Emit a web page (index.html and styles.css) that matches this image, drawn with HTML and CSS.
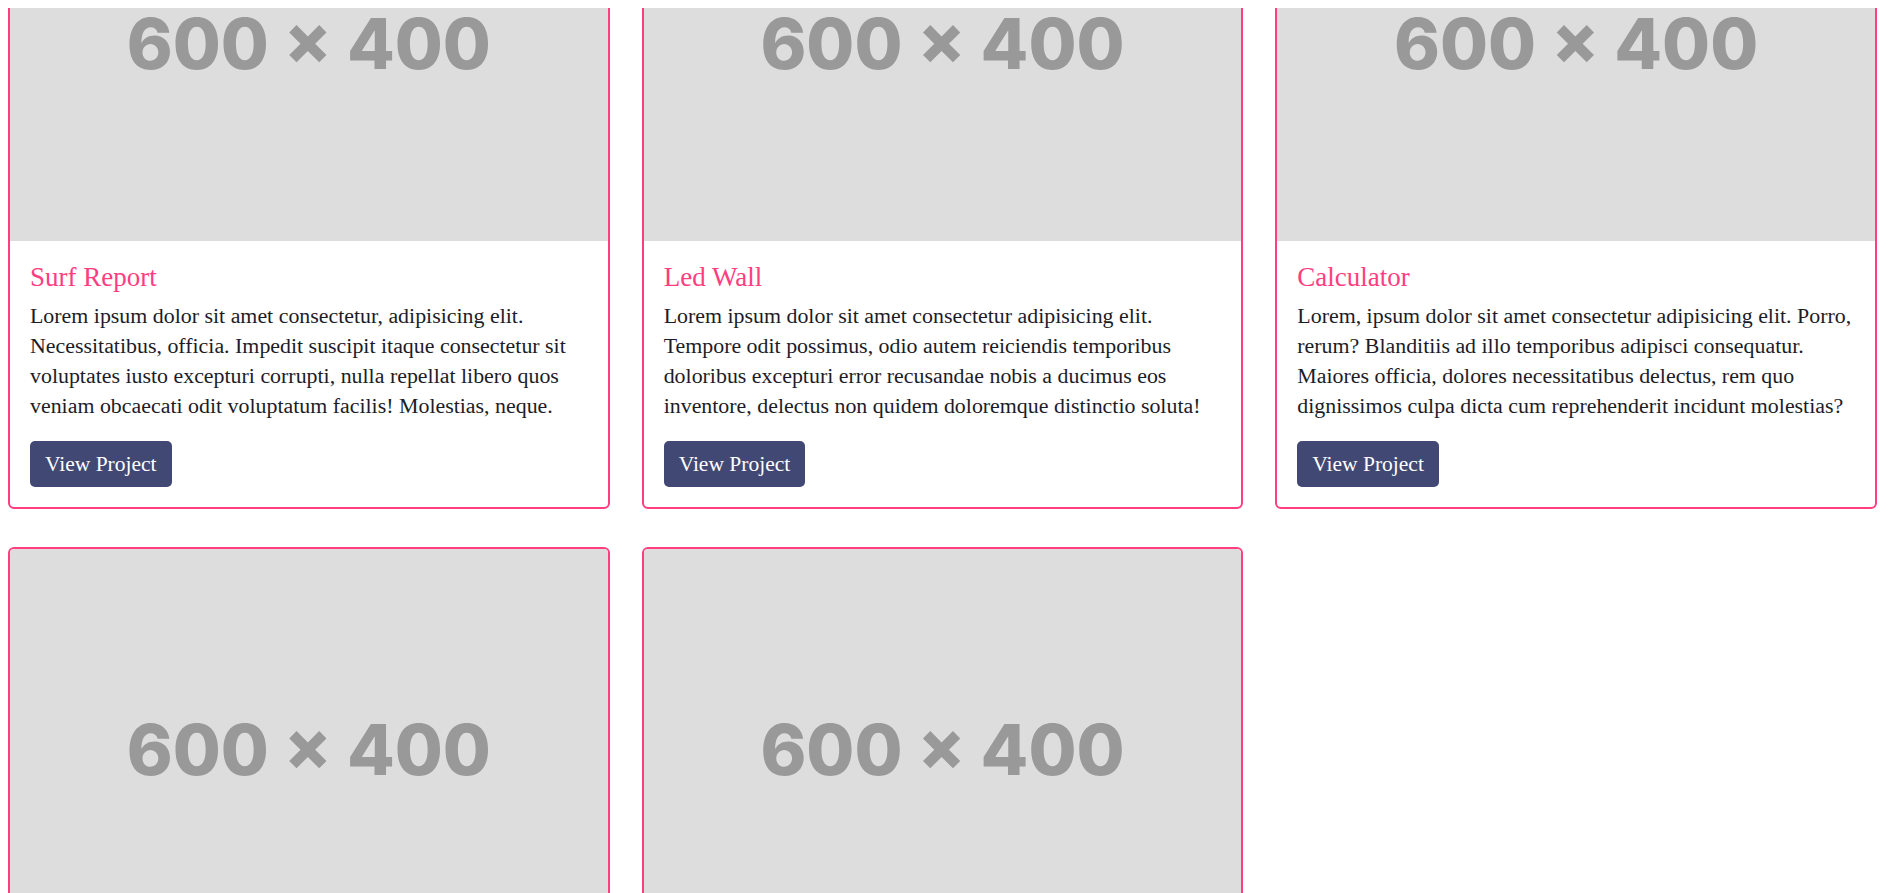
FILE: index.html
```html
<!DOCTYPE html>
<html lang="en">
<head>
<meta charset="utf-8">
<title>Projects</title>
<link rel="stylesheet" href="styles.css">
</head>
<body>
<main class="projects">
  <article class="card">
    <div class="thumb"><span>600 × 400</span></div>
    <div class="card-body">
      <h3 class="card-title">Surf Report</h3>
      <p class="card-text">Lorem ipsum dolor sit amet consectetur, adipisicing elit. Necessitatibus, officia. Impedit suscipit itaque consectetur sit voluptates iusto excepturi corrupti, nulla repellat libero quos veniam obcaecati odit voluptatum facilis! Molestias, neque.</p>
      <a class="btn" href="#">View Project</a>
    </div>
  </article>
  <article class="card">
    <div class="thumb"><span>600 × 400</span></div>
    <div class="card-body">
      <h3 class="card-title">Led Wall</h3>
      <p class="card-text">Lorem ipsum dolor sit amet consectetur adipisicing elit. Tempore odit possimus, odio autem reiciendis temporibus doloribus excepturi error recusandae nobis a ducimus eos inventore, delectus non quidem doloremque distinctio soluta!</p>
      <a class="btn" href="#">View Project</a>
    </div>
  </article>
  <article class="card">
    <div class="thumb"><span>600 × 400</span></div>
    <div class="card-body">
      <h3 class="card-title">Calculator</h3>
      <p class="card-text">Lorem, ipsum dolor sit amet consectetur adipisicing elit. Porro, rerum? Blanditiis ad illo temporibus adipisci consequatur. Maiores officia, dolores necessitatibus delectus, rem quo dignissimos culpa dicta cum reprehenderit incidunt molestias?</p>
      <a class="btn" href="#">View Project</a>
    </div>
  </article>
  <article class="card">
    <div class="thumb"><span>600 × 400</span></div>
    <div class="card-body">
      <h3 class="card-title">Weather App</h3>
      <p class="card-text">Lorem ipsum dolor sit amet consectetur adipisicing elit. Quos, voluptatibus. Ratione esse dolorum nemo quibusdam, fugiat eveniet iste aliquam.</p>
      <a class="btn" href="#">View Project</a>
    </div>
  </article>
  <article class="card">
    <div class="thumb"><span>600 × 400</span></div>
    <div class="card-body">
      <h3 class="card-title">Portfolio</h3>
      <p class="card-text">Lorem ipsum dolor sit amet consectetur adipisicing elit. Veniam, delectus. Officiis laborum explicabo, quia vero deserunt nemo ipsa tempore.</p>
      <a class="btn" href="#">View Project</a>
    </div>
  </article>
</main>
</body>
</html>
```

FILE: styles.css
```css
html, body {
  background: #ffffff;
}

body {
  margin: 8px;
  font-family: "Liberation Serif", Georgia, serif;
  color: #1c1c28;
}

.projects {
  display: grid;
  grid-template-columns: repeat(3, 1fr);
  column-gap: 32px;
  row-gap: 38px;
  margin: -167px 6px 0 0;
}

.card {
  border: 2px solid #ff3d80;
  border-radius: 6px;
  overflow: hidden;
  background: #ffffff;
}

.thumb {
  aspect-ratio: 3 / 2;
  background: #dddddd;
  display: flex;
  align-items: center;
  justify-content: center;
}

.thumb span {
  padding-top: 5px;
  font-family: Inter, "Open Sans", sans-serif;
  font-weight: 800;
  font-size: 69.5px;
  color: #999999;
  line-height: 1;
}

.card-body {
  padding: 20px;
}

.card-title {
  margin: 0 0 8px;
  font-size: 27px;
  line-height: 32px;
  font-weight: 400;
  color: #ff3d80;
}

.card-text {
  margin: 0 0 20px;
  font-size: 21.9px;
  line-height: 30px;
}

.btn {
  display: inline-block;
  height: 46px;
  line-height: 46px;
  padding: 0 15px;
  border-radius: 5px;
  background: #424874;
  color: #ffffff;
  font-size: 21.5px;
  text-decoration: none;
}
```
